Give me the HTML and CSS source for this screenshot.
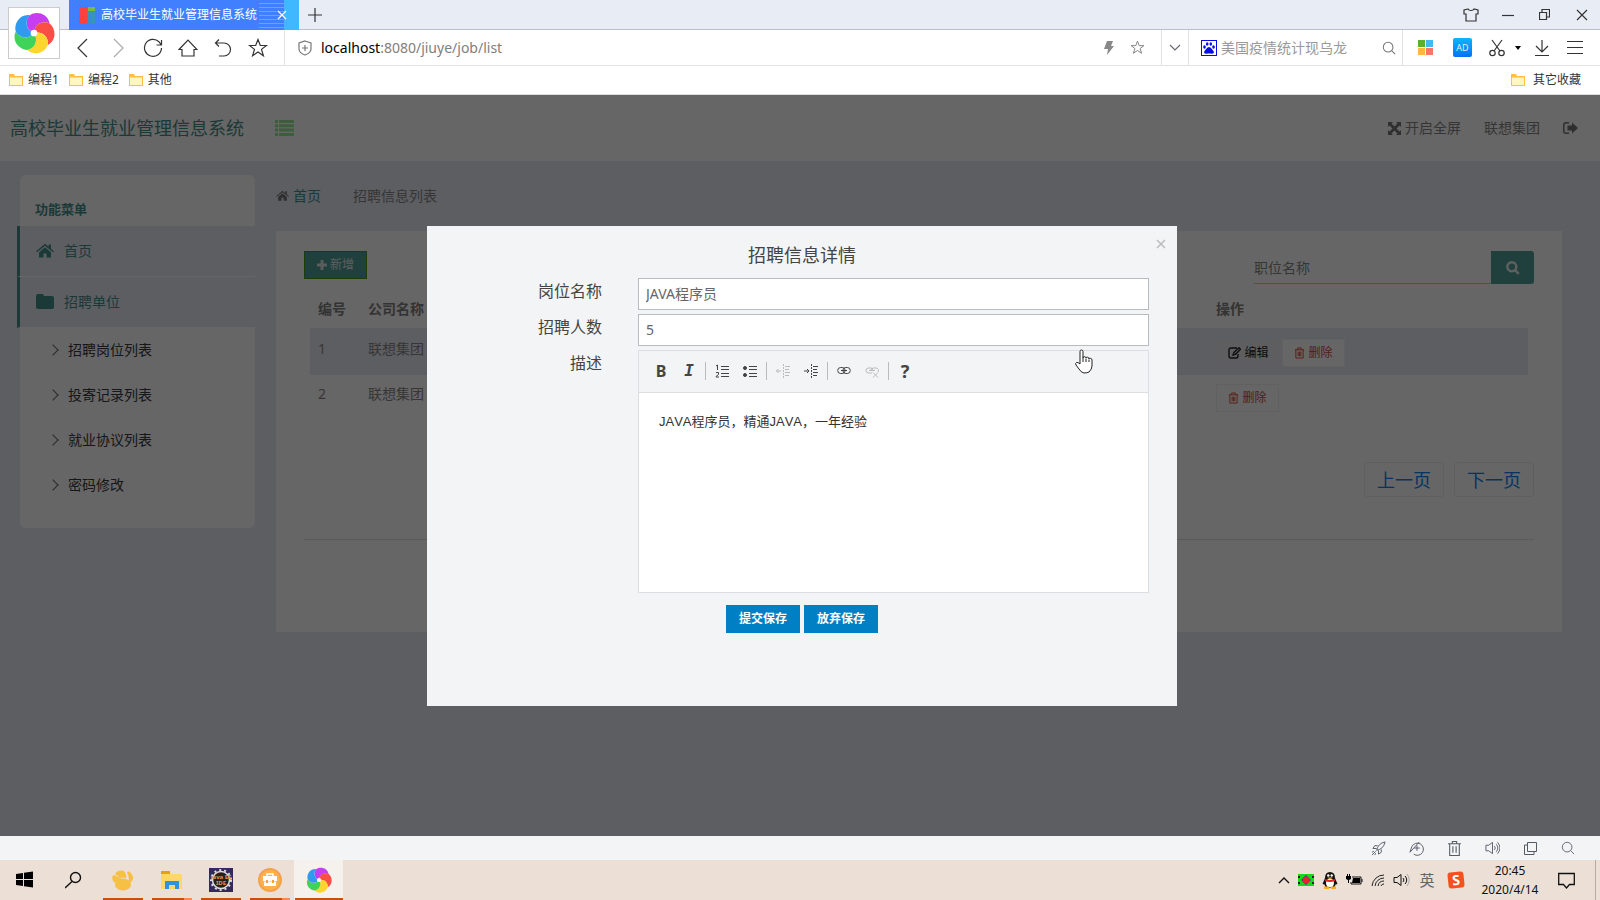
FILE: index.html
```html
<!DOCTYPE html>
<html lang="zh-CN">
<head>
<meta charset="utf-8">
<title>高校毕业生就业管理信息系统</title>
<link rel="stylesheet" href="styles.css">
</head>
<body>
<svg class="defs" aria-hidden="true">
  <symbol id="pinwheel" viewBox="0 0 40 40">
    <path d="M20 20C12 17 11 8 16 3C22-1 33 1 34.900 11C28.600 7.700 20.400 11.500 20 20Z" fill="#c63ef0"/>
    <path d="M20 20C12 17 11 8 16 3C22-1 33 1 34.900 11C28.600 7.700 20.400 11.500 20 20Z" fill="#fb4f45" transform="rotate(72 20 20)"/>
    <path d="M20 20C12 17 11 8 16 3C22-1 33 1 34.900 11C28.600 7.700 20.400 11.500 20 20Z" fill="#fdd52f" transform="rotate(144 20 20)"/>
    <path d="M20 20C12 17 11 8 16 3C22-1 33 1 34.900 11C28.600 7.700 20.400 11.500 20 20Z" fill="#3fd35a" transform="rotate(216 20 20)"/>
    <path d="M20 20C12 17 11 8 16 3C22-1 33 1 34.900 11C28.600 7.700 20.400 11.500 20 20Z" fill="#2f9bf0" transform="rotate(288 20 20)"/>
    <circle cx="20" cy="20" r="3.200" fill="#fff"/>
  </symbol>
  <symbol id="folder" viewBox="0 0 16 14"><path d="M1 1h5l1 2h8v10H1z" fill="#ffbf3f"/><path d="M2 4.500h12v7.500H2z" fill="#fff7c0"/></symbol>
  <symbol id="star" viewBox="0 0 20 20"><path d="M10 1.500l2.300 6h6.200l-5 3.900 1.900 6.300L10 14l-5.400 3.700 1.900-6.300-5-3.900h6.200z"/></symbol>
  <symbol id="lens" viewBox="0 0 16 16"><circle cx="7" cy="7" r="5.500"/><path d="M11 11l4 4"/></symbol>
  <symbol id="fa-home" viewBox="0 0 18 16"><path d="M9 4.200L3 9.200V14.500h4.500v-4h3v4H15V9.200z"/><path d="M9 .8L0 8.200l.9 1L9 2.700l8.100 6.500.9-1-3-2.500V1.500h-2.400v2.200z"/></symbol>
  <symbol id="fa-trash" viewBox="0 0 12 13"><path d="M1 3h10M4 3V1h4v2M2 3v9h8V3M4.500 5v5M6 5v5M7.500 5v5" fill="none" stroke="currentColor"/></symbol>
</svg>

<header class="titlebar">
  <div class="tab">
    <svg width="16" height="16" viewBox="0 0 16 16"><path d="M0 0h8v16H0z" fill="#ff4040"/><path d="M9 0h7v4H9z" fill="#7cb93c"/><path d="M9 5h7v11H9z" fill="#3597b8"/><path d="M11 6v9" stroke="#4080ff"/></svg>
    <span class="tab-title">高校毕业生就业管理信息系统</span>
    <button class="tab-close" aria-label="关闭标签"><svg width="10" height="10" viewBox="0 0 10 10"><path d="M1 1l8 8M9 1L1 9"/></svg></button>
  </div>
  <button class="icon new-tab" aria-label="新建标签"><svg width="14" height="14" viewBox="0 0 14 14"><path d="M7 0v14M0 7h14"/></svg></button>
  <div class="window-buttons">
    <button class="icon" aria-label="皮肤"><svg width="16" height="14" viewBox="0 0 16 14"><path d="M5 1L1 2v4h2v7h10V6h2V2l-4-1c-1 2-5 2-6 0z"/></svg></button>
    <button class="icon" aria-label="最小化"><svg width="12" height="12" viewBox="0 0 12 12"><path d="M0 6.500h12"/></svg></button>
    <button class="icon" aria-label="还原"><svg width="11" height="11" viewBox="0 0 11 11"><path d="M.5 3.500h7v7h-7zM3 3V.5h7.500V8H8"/></svg></button>
    <button class="icon" aria-label="关闭"><svg width="12" height="12" viewBox="0 0 12 12"><path d="M1 1l10 10M11 1L1 11"/></svg></button>
  </div>
</header>
<div class="app-logo"><svg width="42" height="42"><use href="#pinwheel"/></svg></div>

<nav class="toolbar">
  <div class="nav-buttons">
    <button class="icon" aria-label="后退"><svg width="20" height="20" viewBox="0 0 20 20"><path d="M14 1L5 10l9 9"/></svg></button>
    <button class="icon pale" aria-label="前进"><svg width="20" height="20" viewBox="0 0 20 20"><path d="M6 1l9 9-9 9"/></svg></button>
    <button class="icon" aria-label="刷新"><svg width="20" height="20" viewBox="0 0 20 20"><path d="M18.500 10a8.500 8.500 0 1 1-2.500-6.200l2 2.500M18.500 2v5h-5"/></svg></button>
    <button class="icon" aria-label="主页"><svg width="20" height="20" viewBox="0 0 20 20"><path d="M1 11.500L10 2l9 9.500h-3V18H4v-6.500z"/></svg></button>
    <button class="icon" aria-label="恢复"><svg width="20" height="20" viewBox="0 0 20 20"><path d="M6 1.500L2.500 5 6 8.500M2.500 5H11a6.500 6.500 0 0 1 0 13H6"/></svg></button>
    <button class="icon" aria-label="收藏"><svg width="20" height="20"><use href="#star"/></svg></button>
  </div>
  <div class="address">
    <svg class="line" width="14" height="16" viewBox="0 0 14 16"><path d="M7 1l6 2v6c0 3-3 5-6 6-3-1-6-3-6-6V3zM7 5v6M4 8h6"/></svg>
    <span class="url"><b>localhost</b>:8080/jiuye/job/list</span>
    <svg width="10" height="14" viewBox="0 0 10 14"><path d="M3 0h6L7 5h3L3 14l1-6H0z" fill="#888"/></svg>
    <svg class="line" width="15" height="15"><use href="#star"/></svg>
  </div>
  <button class="icon drop" aria-label="展开"><svg width="12" height="8" viewBox="0 0 12 8"><path d="M1 1l5 5 5-5"/></svg></button>
  <div class="search">
    <svg width="16" height="16" viewBox="0 0 16 16"><path d="M0 0h16v16H0z" fill="#0b0be8"/><path d="M1 1h14v14H1z" fill="#fff"/><g fill="#0b0be8"><ellipse cx="3.500" cy="7" rx="1.300" ry="1.700"/><ellipse cx="6.200" cy="4" rx="1.300" ry="1.700"/><ellipse cx="9.800" cy="4" rx="1.300" ry="1.700"/><ellipse cx="12.500" cy="7" rx="1.300" ry="1.700"/><path d="M8 7c2 0 3 2.500 4.500 4 1 1.500 0 3-2 2.800-2-.5-3-.5-5 0-2 .2-3-1.300-2-2.800C5 9.500 6 7 8 7z"/></g></svg>
    <input type="text" aria-label="搜索" placeholder="美国疫情统计现乌龙">
    <svg class="line" width="14" height="14"><use href="#lens"/></svg>
  </div>
  <div class="tools">
    <button class="icon" aria-label="应用"><svg width="15" height="15" viewBox="0 0 15 15"><g stroke="none"><path d="M0 0h7v7H0z" fill="#59b22c"/><path d="M8 0h7v7H8z" fill="#3fbaf5"/><path d="M0 8h7v7H0z" fill="#ffb83e"/><path d="M8 8h7v7H8z" fill="#ff7466"/></g></svg></button>
    <button class="ad" aria-label="广告拦截">AD</button>
    <button class="icon" aria-label="截图"><svg width="16" height="18" viewBox="0 0 16 18"><path d="M3 1l8 11M13 1L5 12"/><circle cx="3.500" cy="14" r="2.700"/><circle cx="12.500" cy="14" r="2.700"/></svg></button>
    <svg class="caret" width="6" height="4" viewBox="0 0 6 4"><path d="M0 0h6L3 4z"/></svg>
    <button class="icon" aria-label="下载"><svg width="16" height="16" viewBox="0 0 16 16"><path d="M8 0v12M2 6l6 6 6-6M1 15.500h14"/></svg></button>
    <button class="icon" aria-label="菜单"><svg width="16" height="16" viewBox="0 0 16 16"><path d="M0 1.500h16M0 7.500h16M0 13.500h16"/></svg></button>
  </div>
</nav>

<nav class="bookmarks">
  <a href="#"><svg width="16" height="14"><use href="#folder"/></svg>编程1</a>
  <a href="#"><svg width="16" height="14"><use href="#folder"/></svg>编程2</a>
  <a href="#"><svg width="16" height="14"><use href="#folder"/></svg>其他</a>
  <a href="#" class="other"><svg width="16" height="14"><use href="#folder"/></svg>其它收藏</a>
</nav>

<main class="page">
  <header class="site-header">
    <h1>高校毕业生就业管理信息系统</h1>
    <button class="toggle" aria-label="切换菜单"><svg width="19" height="16" viewBox="0 0 19 16"><path d="M0 0h3v3H0zM4 0h15v3H4zM0 4.300h3v3H0zM4 4.300h15v3H4zM0 8.600h3v3H0zM4 8.600h15v3H4zM0 13h3v3H0zM4 13h15v3H4z"/></svg></button>
    <div class="user-links">
      <a href="#"><svg width="13" height="13" viewBox="0 0 13 13"><path d="M0 0h5L3.500 1.500l3 3 3-3L8 0h5v5l-1.500-1.500-3 3 3 3L13 8v5H8l1.500-1.500-3-3-3 3L5 13H0V8l1.500 1.500 3-3-3-3L0 5z"/></svg>开启全屏</a>
      <a href="#">联想集团</a>
      <a href="#" aria-label="退出"><svg width="15" height="12" viewBox="0 0 15 12"><path d="M6 0v1.500H3q-1.500 0-1.500 1.500v6q0 1.500 1.500 1.500h3V12H3Q0 12 0 9V3Q0 0 3 0zM9 0.500l6 5.500-6 5.500V8.500H4.500v-5H9z"/></svg></a>
    </div>
  </header>
  <div class="columns">
    <aside class="sidebar">
      <h2>功能菜单</h2>
      <a href="#" class="main-item"><svg width="18" height="16"><use href="#fa-home"/></svg>首页</a>
      <a href="#" class="main-item"><svg width="18" height="16" viewBox="0 0 18 16"><path d="M0 2q0-2 2-2h4q2 0 2 2h8q2 0 2 2v9q0 2-2 2H2q-2 0-2-2z"/></svg>招聘单位</a>
      <ul>
        <li><a href="#">招聘岗位列表</a></li>
        <li><a href="#">投寄记录列表</a></li>
        <li><a href="#">就业协议列表</a></li>
        <li><a href="#">密码修改</a></li>
      </ul>
    </aside>
    <section class="content">
      <nav class="crumbs"><svg width="13" height="12"><use href="#fa-home"/></svg><a href="#">首页</a><span>招聘信息列表</span></nav>
      <div class="card">
        <div class="card-top">
          <button class="add"><svg width="10" height="10" viewBox="0 0 10 10"><path d="M3.500 0h3v3.500H10v3H6.500V10h-3V6.500H0v-3h3.500z"/></svg>新增</button>
          <form class="job-search">
            <input type="text" aria-label="职位名称" placeholder="职位名称">
            <button type="button" aria-label="查询"><svg width="14" height="14" viewBox="0 0 14 14"><circle cx="5.800" cy="5.800" r="4.500"/><path d="M9.300 9.300l3.500 3.500"/></svg></button>
          </form>
        </div>
        <table>
          <thead><tr><th class="no">编号</th><th>公司名称</th><th class="ops">操作</th></tr></thead>
          <tbody>
            <tr class="shade"><td>1</td><td>联想集团</td><td class="ops"><div class="acts"><button class="edit"><svg width="13" height="12" viewBox="0 0 13 12"><path d="M9 1H3Q1 1 1 3v6q0 2 2 2h5q2 0 2-2V7M5 8l1-2.500L11 .8l1.500 1.500-5 5z" fill="none" stroke="currentColor" stroke-width="1.400"/></svg>编辑</button><button class="del"><svg width="11" height="12"><use href="#fa-trash"/></svg>删除</button></div></td></tr>
            <tr><td>2</td><td>联想集团</td><td class="ops"><div class="acts"><button class="del"><svg width="11" height="12"><use href="#fa-trash"/></svg>删除</button></div></td></tr>
          </tbody>
        </table>
        <nav class="pager"><a href="#">上一页</a><a href="#">下一页</a></nav>
        <hr>
      </div>
    </section>
  </div>

  <div class="overlay">
    <form class="dialog" role="dialog" aria-labelledby="dlg-title">
      <button type="button" class="close" aria-label="关闭"><svg width="10" height="10" viewBox="0 0 10 10"><path d="M1 1l8 8M9 1L1 9"/></svg></button>
      <h3 id="dlg-title">招聘信息详情</h3>
      <div class="row"><label for="job">岗位名称</label><input id="job" type="text" value="JAVA程序员"></div>
      <div class="row"><label for="count">招聘人数</label><input id="count" type="text" value="5"></div>
      <div class="row">
        <label for="desc">描述</label>
        <div class="editor">
          <div class="editor-bar">
            <button type="button" class="bold" aria-label="加粗">B</button>
            <button type="button" class="ital" aria-label="倾斜">I</button>
            <i class="sep"></i>
            <button type="button" aria-label="编号列表"><svg width="14" height="14" viewBox="0 0 14 14"><path d="M6 2.500h8M6 5.500h8M6 9.500h8M6 12.500h8M1 2l1.500-1v5M1 8.500h2.500v2L1 12.500V13h3"/></svg></button>
            <button type="button" aria-label="项目列表"><svg width="14" height="14" viewBox="0 0 14 14"><path d="M6 2.500h8M6 5.500h8M6 9.500h8M6 12.500h8"/><circle cx="2" cy="4" r="1.500" fill="#444"/><circle cx="2" cy="11" r="1.500" fill="#444"/></svg></button>
            <i class="sep"></i>
            <button type="button" class="off" aria-label="减少缩进" disabled><svg width="14" height="14" viewBox="0 0 14 14"><path d="M0 7h5M2.500 5L.5 7l2 2"/><path d="M7.500 0v14" stroke-dasharray="2 1"/><path d="M9 2.500h5M9 5.500h4M9 8.500h5M9 11.500h4"/></svg></button>
            <button type="button" aria-label="增加缩进"><svg width="14" height="14" viewBox="0 0 14 14"><path d="M0 7h5M3 5l2 2-2 2"/><path d="M7.500 0v14" stroke-dasharray="2 1"/><path d="M9 2.500h5M9 5.500h4M9 8.500h5M9 11.500h4"/></svg></button>
            <i class="sep"></i>
            <button type="button" aria-label="链接"><svg width="14" height="14" viewBox="0 0 14 14"><rect x=".7" y="3.500" width="7.500" height="6" rx="3"/><rect x="5.800" y="3.500" width="7.500" height="6" rx="3"/><path d="M4 6.500h6"/></svg></button>
            <button type="button" class="off" aria-label="取消链接" disabled><svg width="14" height="14" viewBox="0 0 14 14"><path d="M7 9H3.500a2.500 2.500 0 0 1 0-5H6q2 0 2 2.500M6 6.500Q6 4 8.500 4H11a2.500 2.500 0 0 1 2 4M4 6.500h6M8 8.500l5 5M13 8.500l-5 5"/></svg></button>
            <i class="sep"></i>
            <button type="button" class="help" aria-label="帮助">?</button>
          </div>
          <textarea id="desc">JAVA程序员，精通JAVA，一年经验</textarea>
        </div>
      </div>
      <div class="actions"><button type="button">提交保存</button><button type="button">放弃保存</button></div>
    </form>
  </div>
  <svg class="cursor" width="19" height="25" viewBox="0 0 19 25"><path d="M5 15V2.500q0-1.500 1.500-1.500T8 2.500V9q0-1.500 1.500-1.300T11 9q0-1 1.500-.8T14 10q0-1 1.500-.7T17 11v6q0 3-3 6-2 1-5 1-3-.5-5-4l-3-4q-1-2 .5-2.500T5 15zM8 9v4M11 9.500V13M14 10.500V13" fill="#fff" stroke="#222"/></svg>
</main>

<footer class="statusbar">
  <button class="icon" aria-label="加速"><svg width="15" height="15" viewBox="0 0 16 16"><path d="M6 10C7 5 10 2 15 1c-1 5-4 8-9 9zM6 8H2l2-3h3M8 10v4l3-2V9M5 11l-4 4M1 12l2-1M4 15l1-2"/></svg></button>
  <button class="icon" aria-label="医生"><svg width="15" height="15" viewBox="0 0 16 16"><path d="M5 14a6.500 6.500 0 1 0-2-8L1 12 11 1M8.500 4.500v6M5.500 7.500h6"/></svg></button>
  <button class="icon" aria-label="清理"><svg width="13" height="15" viewBox="0 0 12 14"><path d="M0 2.500h12M4 2V.5h4V2M1.500 2.500v11h9v-11M4.500 5v6M7.500 5v6"/></svg></button>
  <button class="icon" aria-label="声音"><svg width="15" height="14" viewBox="0 0 16 14"><path d="M1 4h3l4-3v12l-4-3H1zM10 5q2 2 0 4M12 3q3.500 4 0 8M13.500 1q5 6 0 12"/></svg></button>
  <button class="icon" aria-label="窗口"><svg width="13" height="13" viewBox="0 0 13 13"><path d="M3.500.5h9v9h-9zM3 3H.5v9.500H10V10"/></svg></button>
  <button class="icon" aria-label="缩放"><svg width="14" height="14"><use href="#lens"/></svg></button>
</footer>

<footer class="taskbar">
  <button class="task" aria-label="开始"><svg width="17" height="17" viewBox="0 0 17 17"><path d="M0 3l7-1v6H0zM8 1.800L17 .5V8H8zM0 9h7v6l-7-1zM8 9h9v7.500L8 15.200z"/></svg></button>
  <button class="task" aria-label="搜索"><svg width="18" height="18" viewBox="0 0 18 18"><g fill="none" stroke="#111" stroke-width="1.400"><circle cx="10.500" cy="6.500" r="5"/><path d="M7 10.500L0 17"/></g></svg></button>
  <button class="task open" aria-label="宠物"><svg width="24" height="22" viewBox="0 0 24 22"><g fill="#f6c044"><ellipse cx="12" cy="15.500" rx="8" ry="6"/><path d="M2 12Q0 7 3 6L11 10Q6 11 4 14zM4 5Q7 0 13 2q3 4 2 7-4-1-6 0zM16 3q2-1 3 0 5 5 2 9-1 2-3 0Q18 7 16 3z"/></g></svg></button>
  <button class="task open multi" aria-label="文件夹"><svg width="22" height="20" viewBox="0 0 22 20"><path d="M0 1h9l1 3h11v15H0z" fill="#ffd766"/><path d="M0 1h9v3H0z" fill="#e0a21c"/><path d="M4 19v-8h14v8h-4v-4H8v4z" fill="#3191dc"/></svg></button>
  <button class="task open ide" aria-label="Java EE IDE"><svg width="24" height="24" viewBox="0 0 24 24"><path d="M0 0h24v24H0z" fill="#35285c"/><circle cx="12" cy="12" r="10" fill="none" stroke="#ddd" stroke-width="2" stroke-dasharray="2 3"/><circle cx="12" cy="12" r="8.500" fill="#222" stroke="#ddd" stroke-width="1.500"/><text x="12" y="11" text-anchor="middle">Java EE</text><text x="12" y="17" text-anchor="middle">IDE</text></svg></button>
  <button class="task open multi" aria-label="工具箱"><svg width="24" height="24" viewBox="0 0 24 24"><circle cx="12" cy="12" r="12" fill="#f5a24a"/><circle cx="12" cy="12" r="10" fill="#ffb04c"/><path d="M9 8V6h6v2" fill="none" stroke="#fff" stroke-width="1.500"/><path d="M5 8h14v5H5zM6 13.500h12V18H6z" fill="#fff"/><path d="M8 12h2v3H8zM14 12h2v3h-2z" fill="#f5a24a"/></svg></button>
  <button class="task open active" aria-label="浏览器"><svg width="26" height="26"><use href="#pinwheel"/></svg></button>
  <div class="tray">
    <svg width="12" height="8" viewBox="0 0 12 8"><path d="M1 7l5-5 5 5" fill="none" stroke="#111" stroke-width="1.400"/></svg>
    <svg width="16" height="12" viewBox="0 0 16 12"><path d="M0 0h16v12H0z" fill="#16d816"/><path d="M0 2h2v2H0zM14 8h2v2h-2zM0 8h2v2H0zM14 2h2v2h-2z" fill="#222"/><path d="M8 1l5 5-5 5-5-5z" fill="#4b3aa0"/><circle cx="8" cy="6" r="3.500" fill="#e8222e"/></svg>
    <svg width="16" height="17" viewBox="0 0 16 17"><path d="M3 6Q3 0 8 0t5 6l2.500 6-2 .5Q13 16 8 16t-5.500-3.500l-2-.5z" fill="#111"/><ellipse cx="8" cy="11" rx="4" ry="4.500" fill="#fff"/><circle cx="6.300" cy="3.500" r="1.200" fill="#fff"/><circle cx="9.700" cy="3.500" r="1.200" fill="#fff"/><path d="M5 5.500h6L8 7z" fill="#ffad16"/><path d="M3 7q5 2 10 0v2q-5 2-10 0z" fill="#e3212c"/><path d="M2 14.500h5V17H2zM9 14.500h5V17H9z" fill="#ffad16"/></svg>
    <svg width="17" height="12" viewBox="0 0 17 12"><path d="M6 3h9v7H5V8M16 5v3" fill="none" stroke="#111"/><path d="M7 4h7v5H6zM0 2h5v3Q2.500 7 0 5zM1 0h1v2H1zM3 0h1v2H3zM2 5h1v4H2z"/></svg>
    <svg width="14" height="14" viewBox="0 0 14 14"><g fill="none" stroke="#222"><path d="M1 13A12 12 0 0 1 13 2M4 13a9 9 0 0 1 9-8M7 13a6 6 0 0 1 6-5M10 13a3 3 0 0 1 3-2"/></g></svg>
    <svg width="17" height="14" viewBox="0 0 17 14"><path d="M1 4.500h3l4-3v11l-4-3H1zM10 5q2 2 0 4M12 3q3.500 4 0 8" fill="none" stroke="#111"/><path d="M14 1q4.500 6 0 12" fill="none" stroke="#aaa"/></svg>
    <span class="ime">英</span>
    <span class="sogou">S</span>
    <time>20:45<br>2020/4/14</time>
    <svg width="17" height="17" viewBox="0 0 17 17"><path d="M.7 1.500h15.600v11H11.500L8.500 16l-3-3.500H.7z" fill="none" stroke="#111" stroke-width="1.300"/></svg>
    <i class="desktop"></i>
  </div>
</footer>
</body>
</html>
```
FILE: styles.css
```css
* { box-sizing: border-box; }

body {
  margin: 0;
  height: 100vh;
  display: flex;
  flex-direction: column;
  position: relative;
  overflow: hidden;
  font-family: "Noto Sans", "Noto Sans CJK SC", sans-serif;
  font-size: 14px;
  line-height: 20px;
  color: #333;
  background: #fff;
}

button, input, textarea { font: inherit; color: inherit; margin: 0; padding: 0; border: 0; background: none; border-radius: 0; outline: 0; }
a { color: inherit; text-decoration: none; }
svg { display: block; flex: none; }
h1, h2, h3 { margin: 0; font-weight: 400; }
.defs { position: absolute; width: 0; height: 0; }

.icon { display: flex; align-items: center; justify-content: center; }
.icon svg, .line { fill: none; stroke: #333; stroke-width: 1.2; }
.line { stroke: #777; }
.pale svg { stroke: #aaa; }

/* browser frame */
.titlebar { display: flex; flex: none; height: 30px; padding-left: 69px; background: #e8ecf4; border-bottom: 1px solid #bcbfc4; }
.tab {
  display: flex;
  align-items: center;
  gap: 6px;
  width: 230px;
  height: 30px;
  padding-left: 10px;
  color: #fff;
  font-size: 12px;
  background: linear-gradient(#3fb8ff, #3fb8ff) right / 15px 100% no-repeat, linear-gradient(90deg, #4080ff 190px, transparent 190px), repeating-linear-gradient(#4080ff 0 3px, #3fb8ff 3px 4px);
}
.tab-title { flex: 1; white-space: nowrap; }
.tab-close { padding-right: 12px; }
.tab-close svg { stroke: #fff; stroke-width: 1.2; }
.new-tab { width: 32px; }
.window-buttons { display: flex; margin-left: auto; }
.window-buttons .icon { width: 37px; }
.app-logo { position: absolute; left: 8px; top: 7px; width: 52px; height: 52px; display: grid; place-items: center; background: #fff; border: 1px solid #ccc; }

.toolbar { display: flex; flex: none; height: 36px; padding-left: 65px; border-bottom: 1px solid #e2e2e2; }
.nav-buttons { display: flex; width: 220px; border-right: 1px solid #e2e2e2; }
.nav-buttons .icon { width: 35px; }
.address { display: flex; align-items: center; flex: 1; gap: 16px; padding: 0 16px 0 13px; border-right: 1px solid #e2e2e2; }
.url { flex: 1; margin-left: -7px; color: #808080; }
.url b { font-weight: 400; color: #000; }
.drop { width: 27px; border-right: 1px solid #e2e2e2; }
.drop svg { stroke: #667; }
.search { display: flex; align-items: center; gap: 4px; width: 214px; padding: 0 6px 0 12px; border-right: 1px solid #e2e2e2; }
.search input { flex: 1; min-width: 0; }
.search input::placeholder { color: #999; opacity: 1; }
.tools { display: flex; align-items: center; gap: 17px; width: 197px; padding-left: 15px; }
.ad { width: 19px; height: 19px; margin-left: 3px; border-radius: 2px; background: linear-gradient(#10b4ff, #0870f4); color: #dff3ff; font-size: 9px; line-height: 18px; }
.caret { margin: 0 -4px 0 -7px; }

.bookmarks { display: flex; align-items: center; flex: none; height: 29px; gap: 9px; padding: 0 19px 0 8px; font-size: 12px; border-bottom: 1px solid #ddd; }
.bookmarks a { display: flex; align-items: center; gap: 4px; }
.bookmarks .other { margin-left: auto; gap: 7px; }

/* site */
.page { position: relative; flex: 1; min-height: 0; background: #e8ebf4; color: #888; }
.site-header { display: flex; align-items: center; height: 66px; padding: 0 22px 0 10px; background: #fff; }
.site-header h1 { font-size: 18px; color: #458f8b; }
.toggle { margin-left: 31px; }
.toggle svg { fill: #98e898; }
.user-links { display: flex; align-items: center; gap: 23px; margin-left: auto; color: #868686; }
.user-links a { display: flex; align-items: center; gap: 4px; }
.user-links svg { fill: #777; }

.columns { display: flex; align-items: flex-start; padding: 0 38px 0 17px; }
.sidebar { flex: none; width: 238px; margin-top: 14px; }
.sidebar h2 { height: 51px; margin-left: 3px; padding: 24px 15px 0; font-size: 13px; font-weight: 700; color: #458f8b; background: #fff; border-radius: 6px 6px 0 0; }
.main-item { display: flex; align-items: center; gap: 10px; height: 51px; padding-left: 16px; color: #458f8b; border-left: 3px solid #458f8b; border-bottom: 1px solid #fff; }
.main-item svg { fill: #458f8b; }
.sidebar ul { margin: 0 0 0 3px; padding: 0 0 20px 29px; list-style: none; background: #fff; border-radius: 0 0 6px 6px; }
.sidebar li a { display: flex; align-items: center; gap: 11px; height: 45px; padding-bottom: 1px; color: #3a3a40; }
.sidebar li a::before { content: ""; width: 7px; height: 7px; border: solid #667; border-width: 1px 1px 0 0; transform: rotate(45deg); }

.content { flex: 1; margin-left: 21px; }
.crumbs { display: flex; align-items: center; height: 70px; }
.crumbs svg { fill: #777; }
.crumbs a { margin: 0 32px 0 4px; color: #458f8b; }
.card { height: 401px; padding: 20px 28px; background: #fff; }
.card-top { display: flex; align-items: flex-start; justify-content: space-between; height: 38px; }
.add { display: flex; align-items: center; justify-content: center; gap: 3px; width: 63px; height: 28px; font-size: 12px; color: #e4e8e8; background: #52a09c; border: 1px solid #4a9a10; }
.add svg { fill: #e4e8e8; }
.job-search { display: flex; }
.job-search input { width: 237px; height: 33px; border-bottom: 1px solid #98e898; }
.job-search input::placeholder { color: #888; opacity: 1; }
.job-search button { display: grid; place-items: center; width: 43px; height: 33px; background: #52a09c; border-radius: 0 3px 3px 0; }
.job-search svg { fill: none; stroke: #f0f0f0; stroke-width: 2.4; }

.card table { width: calc(100% - 12px); margin-left: 6px; border-collapse: collapse; table-layout: fixed; text-align: left; }
.card th { height: 39px; padding: 0 8px; font-weight: 700; color: #808080; }
.card td { height: 45px; padding: 9px 8px 0; vertical-align: top; }
.card .shade td { height: 47px; padding-top: 11px; }
.card .ops { padding-left: 9px; }
.shade { background: #e8ebf4; }
.no { width: 50px; }
.ops { width: 321px; }
.acts { display: flex; gap: 1px; }
.acts button { display: flex; align-items: center; justify-content: center; gap: 3px; width: 63px; height: 28px; font-size: 12px; background: #fff; border: 1px solid #f2f2f2; }
.acts .edit { width: 65px; color: #222; background: #eaecf1; border-color: #eaecf1; }
.acts .del { color: #d84830; }
.pager { display: flex; justify-content: flex-end; gap: 10px; margin-top: 42px; }
.pager a { display: grid; place-items: center; width: 80px; height: 35px; font-size: 18px; color: #1080f0; border: 1px solid #eee; border-radius: 3px; }
.card hr { margin: 42px 0 0; border: 0; border-top: 1px solid #e4e4e4; }

/* dialog */
.overlay { position: absolute; inset: 0; display: flex; align-items: flex-start; justify-content: center; padding: 131px 0 0 4px; background: rgba(0, 0, 0, .6); }
.dialog { position: relative; width: 750px; min-height: 480px; padding: 17px 28px 0; color: #444; background: #f2f4f6; }
.dialog h3 { height: 35px; font-size: 18px; line-height: 24px; text-align: center; }
.close { position: absolute; right: 11px; top: 13px; }
.close svg { stroke: #bbb; stroke-width: 1.5; }
.row { display: flex; justify-content: space-between; margin-bottom: 4px; }
.row label { width: 147px; padding-top: 3px; font-size: 16px; text-align: right; }
.row input { width: 511px; height: 32px; padding: 0 7px 2px; color: #666; background: #fff; border: 1px solid #b8bbbf; }
.editor { width: 511px; border: 1px solid #dcdee1; }
.editor-bar { display: flex; align-items: center; height: 42px; padding: 0 0 2px 8px; border-bottom: 1px solid #dcdee1; }
.editor-bar button { display: grid; place-items: center; width: 28px; height: 26px; font-size: 16px; font-weight: 700; color: #444; }
.editor-bar .ital { font-family: "DejaVu Sans Mono", monospace; font-style: italic; }
.editor-bar .help { font-size: 18px; }
.editor-bar svg { fill: none; stroke: #444; }
.editor-bar .off svg { stroke: #bbb; }
.sep { width: 1px; height: 18px; margin: 0 2px; background: #bbb; }
.editor textarea { display: block; width: 100%; height: 199px; padding: 19px 20px; font-family: "Liberation Sans", "Noto Sans CJK SC", sans-serif; font-size: 13px; font-kerning: none; color: #333; background: #fff; resize: none; }
.actions { display: flex; justify-content: center; gap: 4px; padding-top: 8px; }
.actions button { width: 74px; height: 28px; font-size: 12px; font-weight: 700; color: #fff; background: #0080c4; }
.cursor { position: absolute; left: 1075px; top: 254px; }

/* bottom bars */
.statusbar { display: flex; flex: none; justify-content: flex-end; height: 24px; padding-right: 13px; background: #f2f4f6; }
.statusbar .icon { width: 38px; }
.statusbar svg { stroke: #555b66; stroke-width: 1; }
.taskbar { display: flex; flex: none; height: 40px; background: #ebdfd6; }
.task { display: grid; place-items: center; width: 49px; padding-bottom: 1px; }
.open { background: linear-gradient(#c84f10, #c84f10) center bottom / 40px 2px no-repeat; }
.multi { background: linear-gradient(90deg, #c84f10 32px, #f98a58 32px) center bottom / 40px 2px no-repeat; }
.active { background: linear-gradient(#c84f10, #c84f10) center bottom / 48px 2px no-repeat, #f5f1ec; }
.ide text { font-size: 6px; font-weight: 700; fill: #f09040; }
.tray { display: flex; align-items: center; gap: 8px; margin-left: auto; }
.ime { width: 18px; text-align: center; font-size: 15px; color: #666; }
.sogou { width: 16px; height: 16px; margin: 0 6px 0 4px; border-radius: 3px; color: #fff; background: #f4511e; font-size: 14px; line-height: 16px; font-weight: 700; text-align: center; transform: rotate(-6deg); }
time { width: 64px; color: #111; font-size: 12px; line-height: 19px; text-align: center; white-space: nowrap; }
.tray time + svg { margin-left: 8px; }
.desktop { width: 5px; height: 40px; margin-left: 12px; border-left: 1px solid #b5aca6; }
```
